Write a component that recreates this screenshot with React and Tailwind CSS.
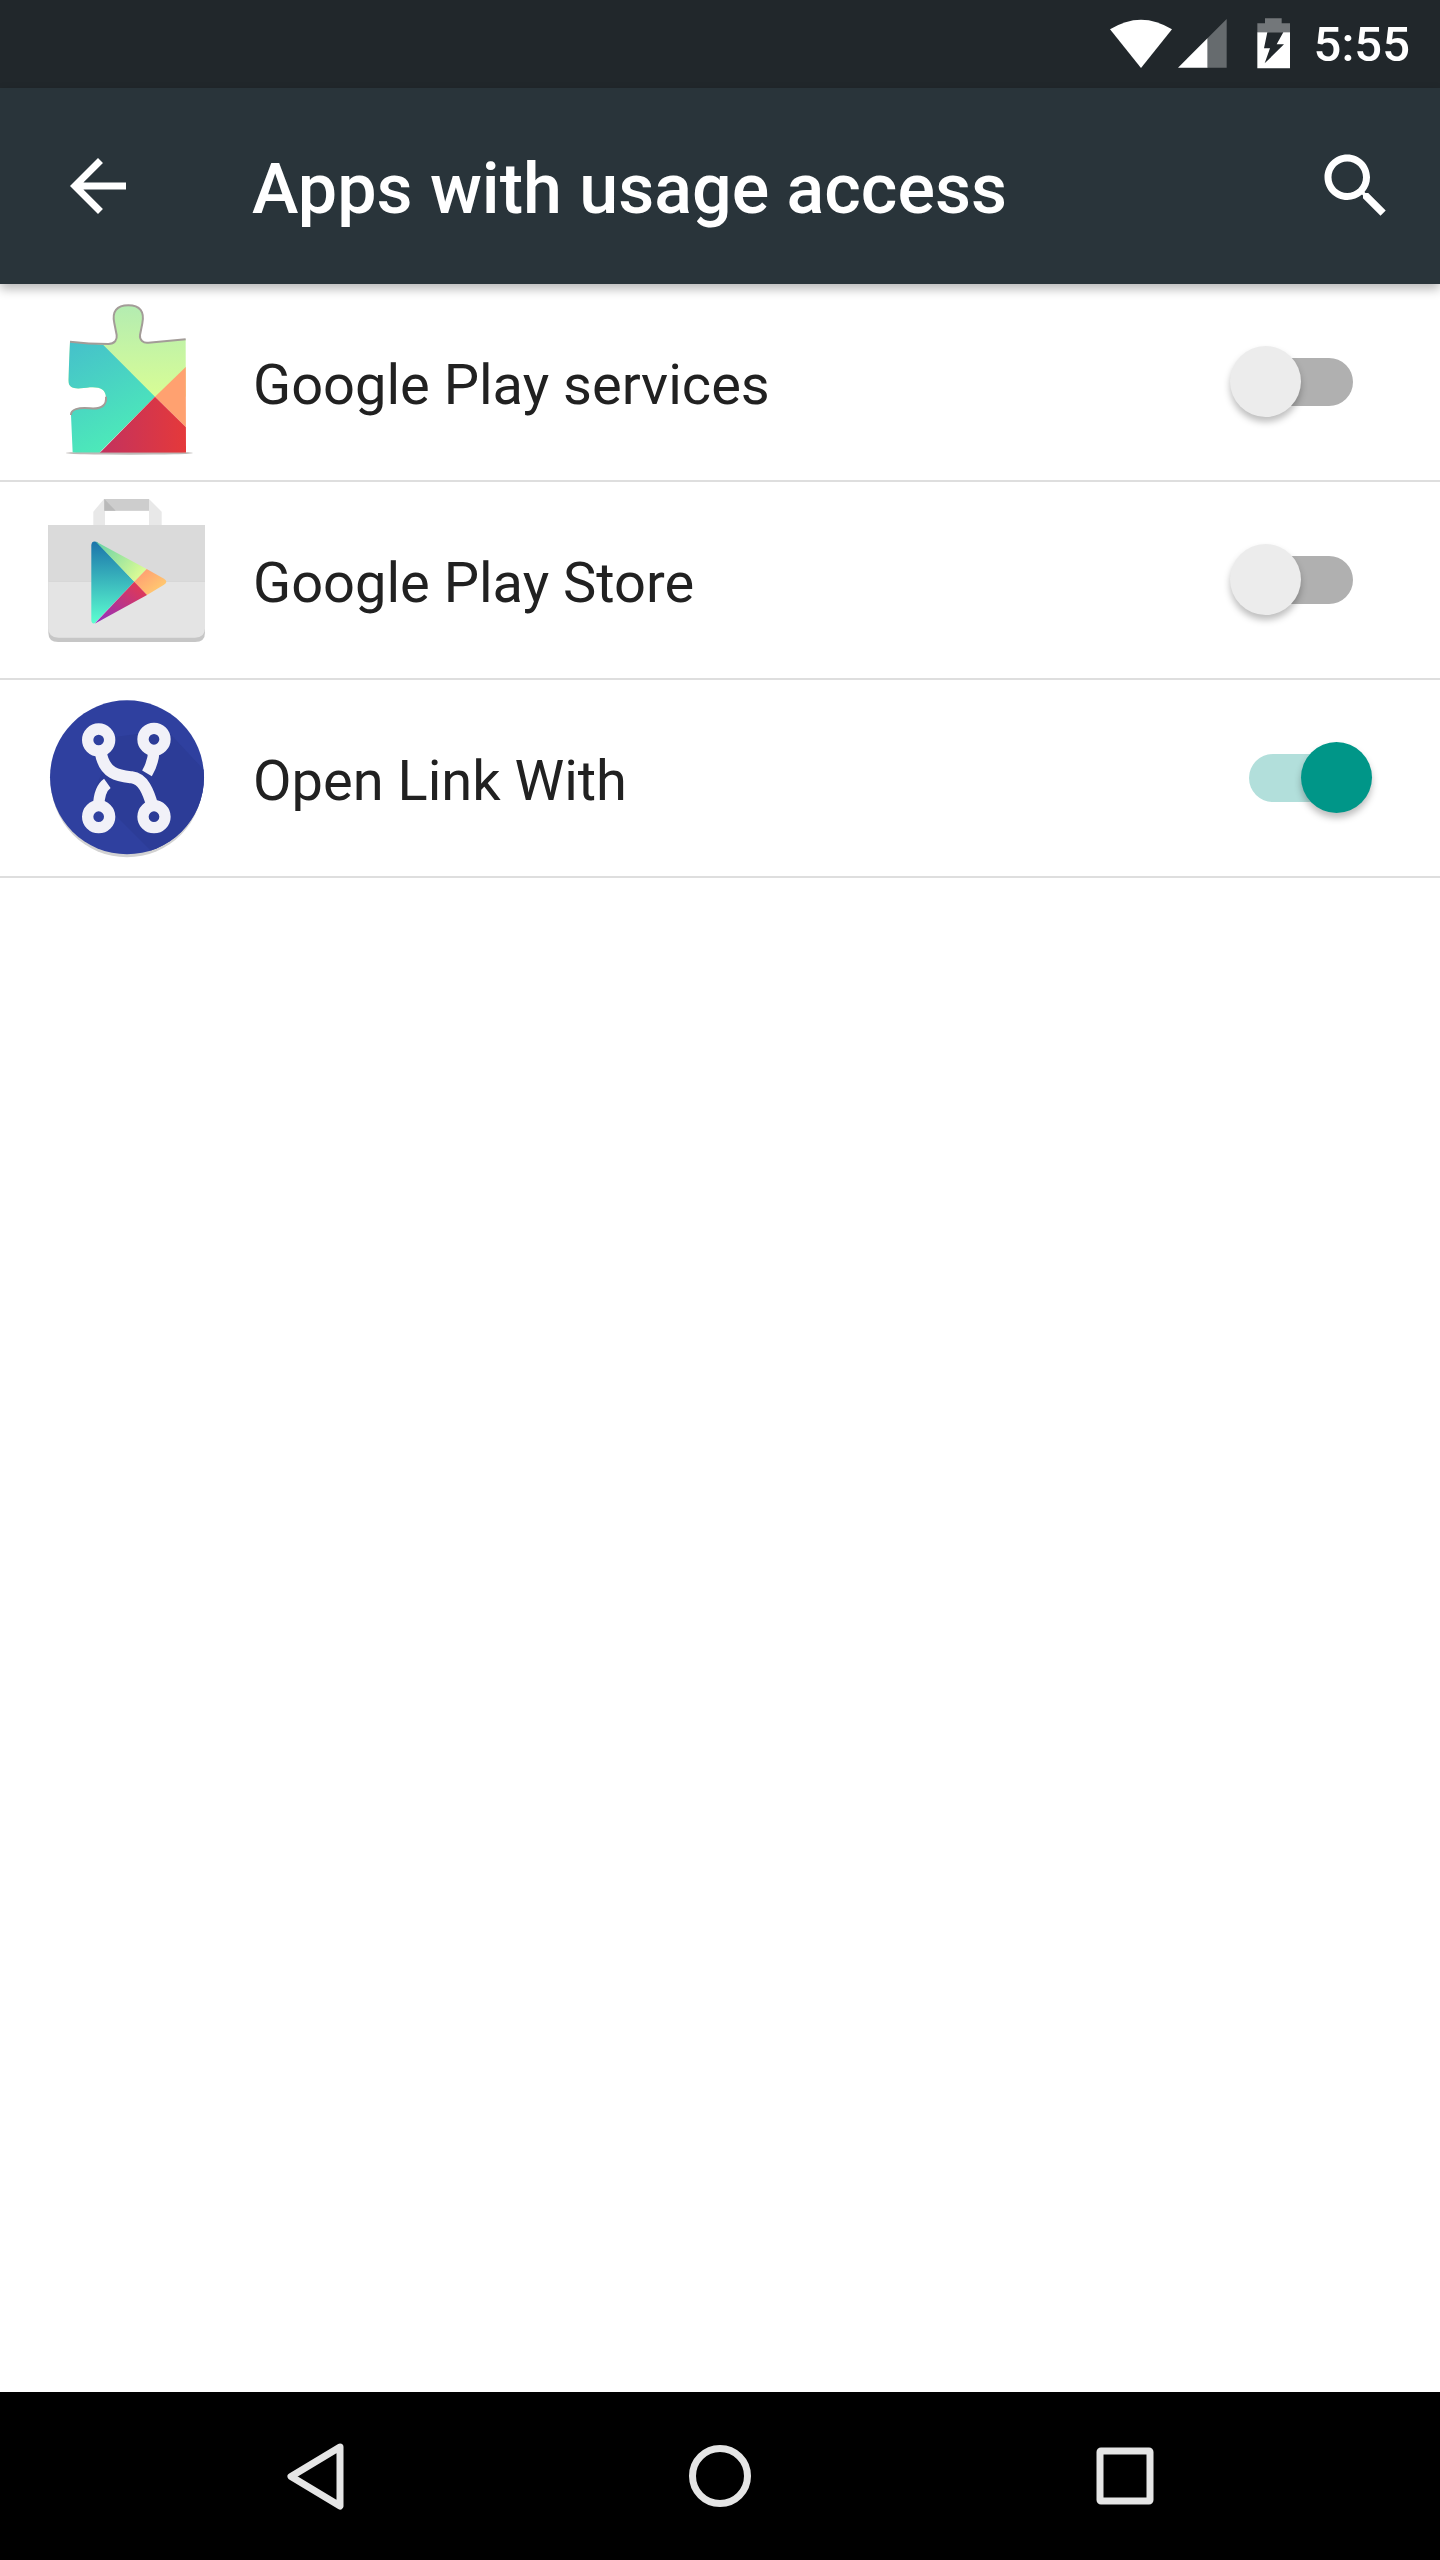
import React from 'react'

const StatusIcons = () => (
  <svg width="200" height="88" viewBox="120 0 600 264">
    <path d="M150 88 Q243 30 336 88 L243 204 Z" fill="#fff" />
    <path d="M354 203 L443 114 V203 Z" fill="#fff" />
    <path d="M443 114 L500 57 V203 H443 Z" fill="#666b6e" />
    <path d="M615 55 H665 V70 H690 V97 H592 V70 H615 Z" fill="#73777a" />
    <path d="M592 97 H690 V205 H592 Z" fill="#fff" />
    <path d="M622 97 H670 L650 133 H672 L614 190 L630 145 H612 Z" fill="#21272b" />
  </svg>
)

const PuzzleIcon = () => {
  const outline = 'M210 185 C250 190 290 192 325 192 C345 192 352 178 350 165 L343 130 C335 95 350 76 385 76 C420 76 434 95 427 130 L420 165 C418 180 430 190 445 188 L557 178 L558 518 L218 518 L213 405 C212 388 235 382 270 385 C310 388 320 372 318 350 C316 328 300 320 270 322 C235 326 205 332 205 300 Z'
  return (
    <svg width="168" height="168" viewBox="129 54 504 504">
      <defs>
        <clipPath id="puzzle"><path d={outline} /></clipPath>
        <linearGradient id="pzGreen" x1="0" y1="0" x2="0" y2="1">
          <stop offset="0" stopColor="#b3ecb2" />
          <stop offset="1" stopColor="#d8fd95" />
        </linearGradient>
        <linearGradient id="pzTeal" x1="0" y1="0" x2="0.4" y2="1">
          <stop offset="0" stopColor="#45bfcb" />
          <stop offset="1" stopColor="#4deab9" />
        </linearGradient>
        <linearGradient id="pzRed" x1="0" y1="0" x2="1" y2="0">
          <stop offset="0" stopColor="#c2325f" />
          <stop offset="1" stopColor="#e5393a" />
        </linearGradient>
      </defs>
      <ellipse cx="388" cy="519" rx="190" ry="5" fill="#bdb8b6" />
      <g clipPath="url(#puzzle)">
        <rect x="200" y="70" width="360" height="280" fill="url(#pzGreen)" />
        <path d="M200 180 L310 195 L465 350 L298 518 H200 Z" fill="url(#pzTeal)" />
        <path d="M560 258 L465 350 L560 444 Z" fill="#ffa170" />
        <path d="M465 350 L560 444 V520 H298 Z" fill="url(#pzRed)" />
      </g>
      <path d="M210 185 C250 190 290 192 325 192 C345 192 352 178 350 165 L343 130 C335 95 350 76 385 76 C420 76 434 95 427 130 L420 165 C418 180 430 190 445 188 L557 178" fill="none" stroke="#a39c98" strokeWidth="6" />
      <path d="M213 405 C212 388 235 382 270 385 C310 388 320 372 318 350" fill="none" stroke="#a39c98" strokeWidth="6" />
    </svg>
  )
}

const StoreIcon = () => (
  <svg width="168" height="168" viewBox="129 48 504 504">
    <defs>
      <linearGradient id="playBlue" x1="0" y1="0" x2="0" y2="1">
        <stop offset="0" stopColor="#1b74ab" />
        <stop offset="1" stopColor="#5cffd0" />
      </linearGradient>
      <linearGradient id="playGreen" x1="0" y1="0" x2="1" y2="0.6">
        <stop offset="0" stopColor="#62cfa8" />
        <stop offset="1" stopColor="#d9fb95" />
      </linearGradient>
      <linearGradient id="playOrange" x1="0" y1="0" x2="1" y2="1">
        <stop offset="0" stopColor="#ff9572" />
        <stop offset="1" stopColor="#ffd670" />
      </linearGradient>
      <linearGradient id="playRed" x1="1" y1="0" x2="0" y2="1">
        <stop offset="0" stopColor="#ea3a47" />
        <stop offset="1" stopColor="#8f2fc4" />
      </linearGradient>
    </defs>
    <path d="M280 135 V95 L312 57 H447 L485 95 V135 H447 V92 H315 V135 Z" fill="#e8e8e8" />
    <path d="M313 57 H447 V92 H313 Z" fill="#cdcdcd" />
    <path d="M313 57 L347 92 H313 Z" fill="#b9b9b9" />
    <path d="M145 135 H615 V458 Q615 486 585 486 H175 Q145 486 145 458 Z" fill="#c6c6c6" />
    <path d="M145 305 H615 V445 Q615 473 585 473 H175 Q145 473 145 445 Z" fill="#e4e4e4" />
    <path d="M145 135 H615 V305 H145 Z" fill="#dadada" />
    <path d="M274 195 Q276 180 292 187 L403 305 L284 430 Q274 432 274 420 Z" fill="url(#playBlue)" />
    <path d="M286 184 L440 267 L403 305 Z" fill="url(#playGreen)" />
    <path d="M440 267 L492 296 Q506 305 492 314 L441 345 L403 305 Z" fill="url(#playOrange)" />
    <path d="M403 305 L441 345 L284 431 Z" fill="url(#playRed)" />
  </svg>
)

const LinkIcon = () => (
  <svg width="168" height="168" viewBox="129 42 504 504">
    <defs>
      <clipPath id="linkCircle"><circle cx="381" cy="292" r="231" /></clipPath>
    </defs>
    <ellipse cx="381" cy="300" rx="229" ry="232" fill="#d2d2d2" />
    <circle cx="381" cy="292" r="231" fill="#2f409f" />
    <g clipPath="url(#linkCircle)">
      <path d="M350 170 L500 150 L640 300 L600 560 L470 530 L280 340 Z" fill="#2c3c97" />
    </g>
    <g fill="none" stroke="#f1f1f8">
      <circle cx="296" cy="180" r="33" strokeWidth="34" />
      <circle cx="462" cy="178" r="33" strokeWidth="34" />
      <circle cx="296" cy="410" r="33" strokeWidth="34" />
      <circle cx="462" cy="410" r="33" strokeWidth="34" />
      <path d="M302 215 C312 285 360 288 395 292 C430 296 445 335 458 380" strokeWidth="36" />
      <path d="M462 212 C460 240 452 262 441 280" strokeWidth="34" />
      <path d="M322 310 C305 322 297 345 296 378" strokeWidth="34" />
    </g>
  </svg>
)

const Toggle = ({ on }) => (
  <div className={`relative h-12 w-[104px] rounded-full ${on ? 'bg-[#b2dfdb]' : 'bg-[#b0b0b0]'}`}>
    <div
      className={`absolute top-[-12px] h-[71px] w-[71px] rounded-full shadow-[0_5px_7px_rgba(0,0,0,0.26)] ${
        on ? 'right-[-19px] bg-[#009688]' : 'left-[-19px] bg-[#ececec]'
      }`}
    ></div>
  </div>
)

const apps = [
  { name: 'Google Play services', icon: <PuzzleIcon />, on: false },
  { name: 'Google Play Store', icon: <StoreIcon />, on: false },
  { name: 'Open Link With', icon: <LinkIcon />, on: true },
]

export default function App() {
  return (
    <div className="flex h-[2560px] w-[1440px] flex-col bg-white font-['Roboto',sans-serif]">
      <div className="flex h-[88px] items-center justify-end bg-[#21272b] pr-[30px]">
        <StatusIcons />
        <span className="mt-[2px] ml-[14px] text-[49px] font-medium text-white">5:55</span>
      </div>

      <header className="relative z-10 flex h-[196px] items-center bg-[#29343a] pr-[42px] pl-14 shadow-[0_5px_10px_rgba(0,0,0,0.28)]">
        <svg width="84" height="84" viewBox="0 0 24 24" fill="#fff">
          <path d="M20 11H7.83l5.59-5.59L12 4l-8 8 8 8 1.41-1.41L7.83 13H20v-2z" />
        </svg>
        <h1 className="mt-[6px] ml-[112px] text-[70px] font-medium text-white">Apps with usage access</h1>
        <svg className="ml-auto" width="84" height="84" viewBox="0 0 24 24" fill="#fff">
          <path d="M15.5 14h-.79l-.28-.27C15.41 12.59 16 11.11 16 9.5 16 5.91 13.09 3 9.5 3S3 5.91 3 9.5 5.91 16 9.5 16c1.61 0 3.09-.59 4.23-1.57l.27.28v.79l5 4.99L20.49 19l-4.99-5zm-6 0C7.01 14 5 11.99 5 9.5S7.01 5 9.5 5 14 7.01 14 9.5 11.99 14 9.5 14z" />
        </svg>
      </header>

      <main className="flex-1 bg-white">
        {apps.map((app) => (
          <div key={app.name} className="flex h-[198px] items-center border-b-[2px] border-[#dedede] pr-[87px] pl-[43px]">
            {app.icon}
            <span className="mt-[6px] ml-[42px] text-[56px] text-[#212121]">{app.name}</span>
            <div className="ml-auto">
              <Toggle on={app.on} />
            </div>
          </div>
        ))}
      </main>

      <nav className="flex h-[168px] items-center justify-center gap-[321px] bg-black">
        <svg width="84" height="84" viewBox="0 0 84 84" fill="none" stroke="#e5e5e5" strokeWidth="7" strokeLinejoin="round">
          <path d="M67 13 L18 42.5 L67 72 Z" />
        </svg>
        <svg width="84" height="84" viewBox="0 0 84 84" fill="none" stroke="#e5e5e5" strokeWidth="7">
          <circle cx="42" cy="42" r="27.5" />
        </svg>
        <svg width="84" height="84" viewBox="0 0 84 84" fill="none" stroke="#e5e5e5" strokeWidth="7" strokeLinejoin="round">
          <rect x="17" y="17" width="50" height="50" rx="1" />
        </svg>
      </nav>
    </div>
  )
}
